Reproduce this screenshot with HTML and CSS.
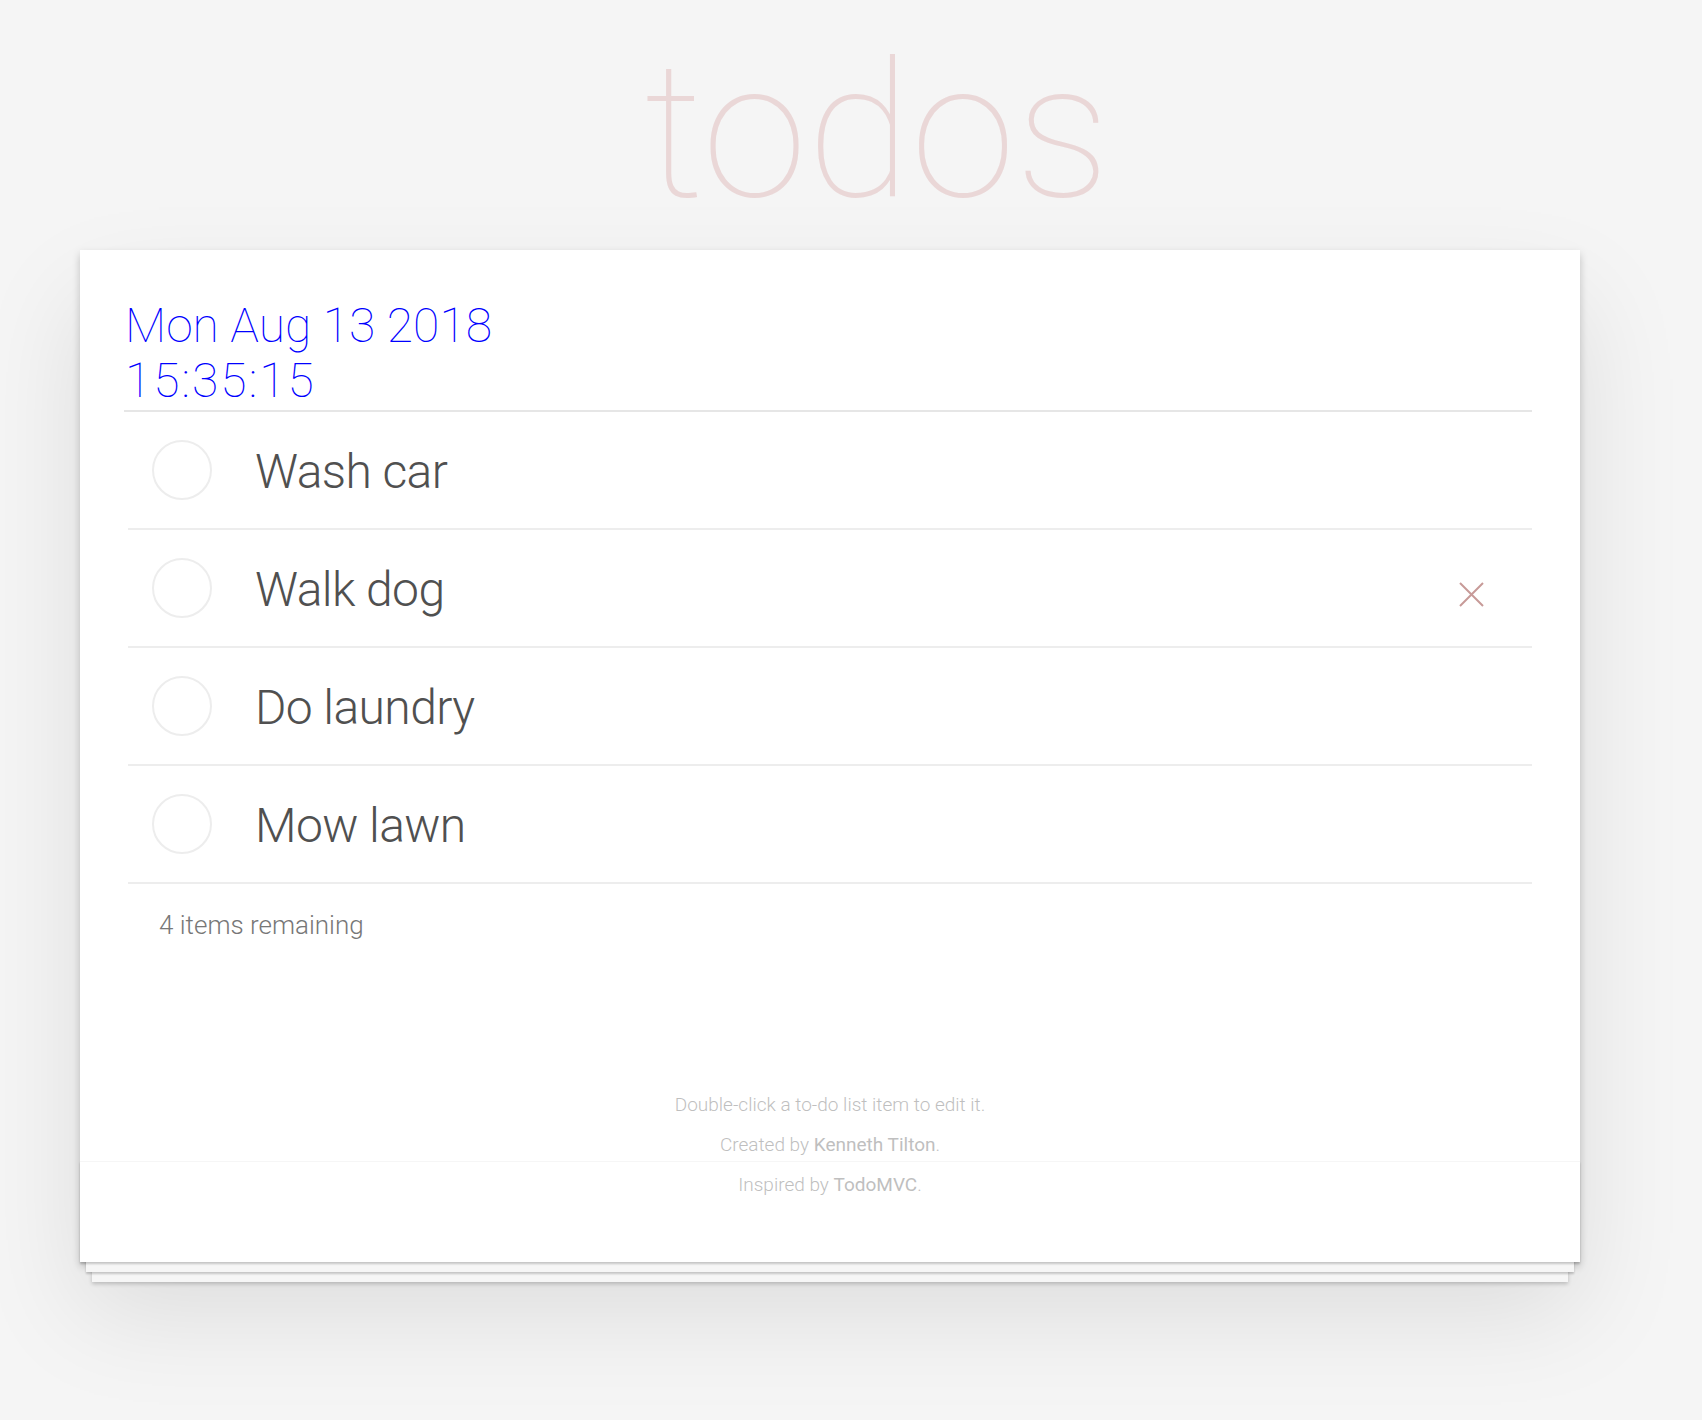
FILE: index.html
```html
<!DOCTYPE html>
<html lang="en">
<head>
<meta charset="utf-8">
<title>todos</title>
<link rel="stylesheet" href="styles.css">
</head>
<body>
<div class="app">
  <h1 class="title">todos</h1>
  <section class="card">
    <div class="clock">
      <div>Mon Aug 13 2018</div>
      <div class="time">15:35:15</div>
    </div>
    <ul class="list">
      <li class="item"><span class="toggle"></span><span class="label">Wash car</span></li>
      <li class="item"><span class="toggle"></span><span class="label">Walk dog</span>
        <span class="destroy"><svg width="25" height="25" viewBox="0 0 25 25"><path d="M1 1 L24 24 M24 1 L1 24" stroke="#c79a98" stroke-width="2" fill="none"/></svg></span></li>
      <li class="item"><span class="toggle"></span><span class="label">Do laundry</span></li>
      <li class="item"><span class="toggle"></span><span class="label">Mow lawn</span></li>
    </ul>
    <div class="footer">4 items remaining</div>
    <div class="info">
      <p>Double-click a to-do list item to edit it.</p>
      <p>Created by <a href="#">Kenneth Tilton</a>.</p>
      <p>Inspired by <a href="#">TodoMVC</a>.</p>
    </div>
  </section>
</div>
</body>
</html>
```
FILE: styles.css
```css
html, body {
  margin: 0;
  padding: 0;
}
body {
  background: #f5f5f5;
  font-family: Roboto, "Helvetica Neue", Arial, sans-serif;
  color: #4d4d4d;
  min-height: 1420px;
}
.app {
  display: flex;
  flex-direction: column;
}
.title {
  margin: 36px 0 24px 0;
  padding-left: 52px;
  height: 190px;
  font-size: 190px;
  line-height: 190px;
  font-weight: 100;
  text-align: center;
  color: #ead7d7;
}
.card {
  position: relative;
  margin-left: 80px;
  width: 1500px;
  height: 1012px;
  background: #fff;
  box-shadow: 0 4px 8px 0 rgba(0,0,0,0.2), 0 50px 100px 0 rgba(0,0,0,0.1);
  display: flex;
  flex-direction: column;
}
.card::after {
  content: "";
  position: absolute;
  left: 0;
  right: 0;
  bottom: 0;
  height: 100px;
  border-top: 1px solid #f6f6f6;
  box-shadow: 0 2px 2px rgba(0,0,0,0.2),
              0 16px 0 -6px #f6f6f6,
              0 18px 2px -6px rgba(0,0,0,0.2),
              0 32px 0 -12px #f6f6f6,
              0 34px 4px -12px rgba(0,0,0,0.2);
  pointer-events: none;
}
.clock {
  margin: 0 48px 0 44px;
  padding: 48px 0 2px 1px;
  font-size: 48px;
  line-height: 55px;
  font-weight: 100;
  color: #0000ff;
  border-bottom: 2px solid #e6e6e6;
}
.time {
  letter-spacing: 2px;
}
.list {
  list-style: none;
  margin: 0 48px 0 48px;
  padding: 0;
}
.item {
  display: flex;
  align-items: center;
  height: 116px;
  border-bottom: 2px solid #ededed;
}
.toggle {
  box-sizing: border-box;
  width: 60px;
  height: 60px;
  margin-left: 24px;
  border: 2px solid #ededed;
  border-radius: 50%;
  flex: none;
}
.label {
  margin-left: 43px;
  font-size: 48px;
  line-height: 116px;
  font-weight: 300;
  letter-spacing: -0.6px;
  color: #505050;
  flex: 1;
  padding-top: 3px;
}
.destroy {
  width: 25px;
  height: 25px;
  margin-right: 48px;
  margin-top: 12px;
  display: flex;
}
.footer {
  margin-left: 79px;
  padding-top: 21px;
  font-size: 26px;
  line-height: 40px;
  font-weight: 300;
  color: #777;
}
.info {
  margin-top: 140px;
  text-align: center;
  font-size: 19px;
  line-height: 40px;
  font-weight: 300;
  color: #bfbfbf;
}
.info p {
  margin: 0;
}
.info a {
  color: inherit;
  text-decoration: none;
  font-weight: 400;
}
```
